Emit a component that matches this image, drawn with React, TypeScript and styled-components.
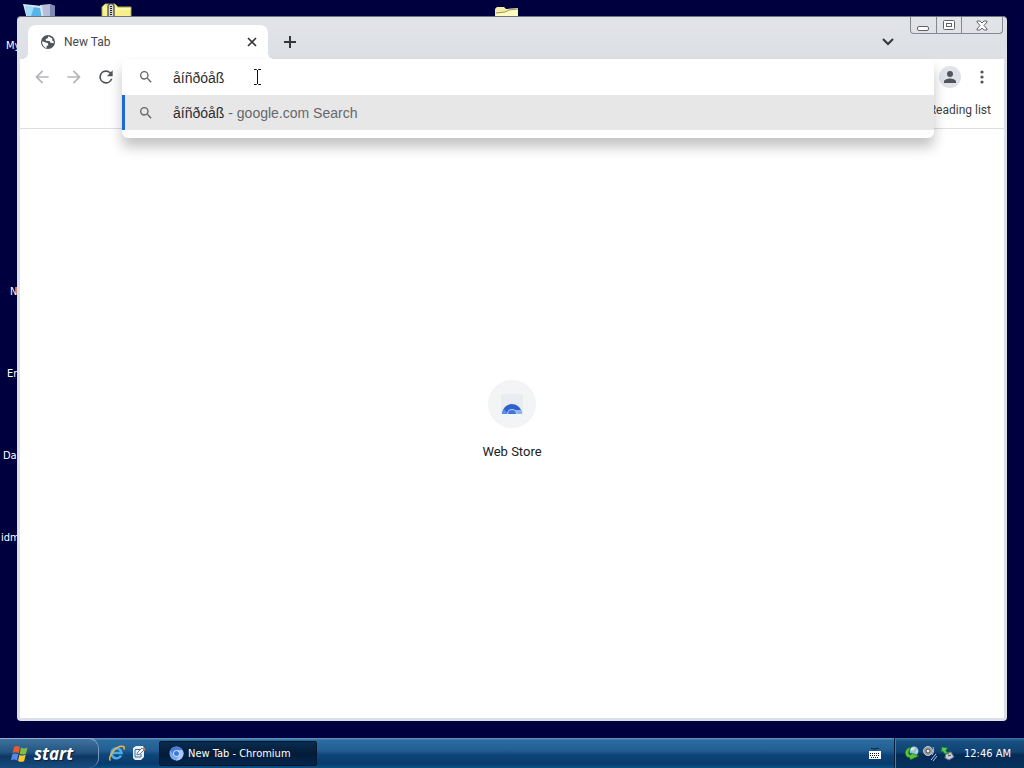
import React, { useState } from 'react'
import styled, { createGlobalStyle } from 'styled-components'

const GlobalStyle = createGlobalStyle`
  * {
    box-sizing: border-box;
  }
  body {
    margin: 0;
    font-family: Roboto, 'Liberation Sans', sans-serif;
  }
  button {
    border: 0;
    padding: 0;
    background: none;
    font-family: inherit;
  }
`

const Screen = styled.div`
  display: flex;
  flex-direction: column;
  height: 100vh;
  overflow: hidden;
  background: #00003f;
`

const Desktop = styled.main`
  position: relative;
  flex: 1;
`

const Shortcut = styled.div<{ x: number; y: number }>`
  position: absolute;
  left: ${props => props.x}px;
  top: ${props => props.y}px;
  color: #ffffff;
  font: 11px/16px 'DejaVu Sans Condensed', 'DejaVu Sans', sans-serif;
  white-space: nowrap;

  svg {
    display: block;
  }
`

const Window = styled.section`
  position: absolute;
  top: 16px;
  right: 17px;
  bottom: 17px;
  left: 17px;
  display: flex;
  flex-direction: column;
  padding: 0 3px 3px;
  border-top: 1px solid #70747c;
  border-radius: 4px;
  background: #dddfe9;
`

const TitleBar = styled.header`
  display: flex;
  align-items: flex-end;
  height: 42px;
  padding-left: 8px;
  background: linear-gradient(#e2e4e8, #dcdfe4);
`

const Tab = styled.div`
  position: relative;
  display: flex;
  align-items: center;
  width: 240px;
  height: 34px;
  padding: 0 8px 0 12px;
  border-radius: 8px 8px 0 0;
  background: #ffffff;
  color: #45494d;
  font-size: 12px;

  &::before,
  &::after {
    content: '';
    position: absolute;
    bottom: 0;
    width: 6px;
    height: 6px;
  }
  &::before {
    right: 100%;
    background: radial-gradient(circle at 0 0, transparent 6px, #ffffff 6px);
  }
  &::after {
    left: 100%;
    background: radial-gradient(circle at 100% 0, transparent 6px, #ffffff 6px);
  }
`

const TabTitle = styled.span`
  flex: 1;
  margin-left: 8px;
`

const IconButton = styled.button<{ size: number }>`
  display: flex;
  align-items: center;
  justify-content: center;
  flex: none;
  width: ${props => props.size}px;
  height: ${props => props.size}px;
  border-radius: 50%;
`

const NewTabButton = styled(IconButton)`
  margin: 0 auto 3px 8px;
`

const TabSearchButton = styled(IconButton)`
  margin: 0 8px 3px 0;
`

const WindowButtons = styled.div`
  display: flex;
  align-self: flex-start;
  margin-right: 1px;
  border: 1px solid #85898f;
  border-top: 0;
  border-radius: 0 0 4px 4px;
`

const WindowButton = styled.button<{ $wide?: boolean }>`
  display: flex;
  align-items: center;
  justify-content: center;
  width: ${props => (props.$wide ? 41 : 25)}px;
  height: 16px;

  & + & {
    border-left: 1px solid #85898f;
  }
`

const Toolbar = styled.nav`
  position: relative;
  z-index: 1;
  display: flex;
  align-items: center;
  height: 36px;
  padding: 0 11px 0 8px;
  background: #ffffff;
`

const NavButtons = styled.div`
  display: flex;
  gap: 4px;
`

const OmniboxSlot = styled.div`
  position: relative;
  flex: 1;
  height: 36px;
  margin: 0 2px;
`

const Omnibox = styled.div`
  position: absolute;
  top: 0;
  right: 0;
  left: 0;
  padding-bottom: 8px;
  border-radius: 6px;
  background: #ffffff;
  box-shadow: 0 9px 13px rgba(0, 0, 0, 0.24);
`

const OmniboxRow = styled.label`
  display: flex;
  align-items: center;
  height: 36px;
  padding-left: 16px;
`

const Address = styled.input`
  flex: 1;
  margin-left: 19px;
  padding: 2px 0 0;
  border: 0;
  outline: 0;
  background: none;
  color: #2b2c2f;
  font: 14px 'Liberation Sans', sans-serif;
`

const Suggestion = styled.button`
  display: flex;
  align-items: center;
  width: 100%;
  height: 35px;
  padding-left: 13px;
  border-left: 3px solid #1f67d2;
  background: #e7e7e7;
  color: #66686b;
  font: 14px 'Liberation Sans', sans-serif;
  text-align: left;
  white-space: pre;
`

const SuggestionText = styled.span`
  margin-left: 19px;
  padding-top: 1px;

  b {
    color: #2b2c2f;
    font-weight: normal;
  }
`

const Avatar = styled(IconButton)`
  margin: 0 10px 0 3px;
  background: #dfe2e8;
`

const BookmarksBar = styled.div`
  display: flex;
  align-items: center;
  justify-content: flex-end;
  height: 34px;
  padding: 0 13px 4px;
  border-bottom: 1px solid #dcdde0;
  background: #ffffff;
`

const ReadingList = styled.button`
  color: #3c4043;
  font-size: 12px;
`

const Page = styled.div`
  display: flex;
  flex: 1;
  justify-content: center;
  align-items: center;
  padding-bottom: 8px;
  background: #ffffff;
`

const StoreLink = styled.a`
  display: flex;
  flex-direction: column;
  align-items: center;
  gap: 16px;
  color: #202124;
  font-size: 13px;
  line-height: 16px;
  text-decoration: none;
`

const StoreIcon = styled.span`
  display: flex;
  align-items: center;
  justify-content: center;
  width: 48px;
  height: 48px;
  border-radius: 50%;
  background: #f3f4f6;
`

const TextCursor = styled.svg`
  position: absolute;
  top: 10px;
  left: 131px;
`

const Taskbar = styled.footer`
  display: flex;
  flex: none;
  height: 30px;
  background: linear-gradient(#6f9cc4 0, #2b6c9f 2px, #245f94 12px, #0d4479 17px, #093b6b 26px, #0a5288 30px);
  color: #ffffff;
`

const StartButton = styled.button`
  display: flex;
  align-items: center;
  gap: 4px;
  width: 99px;
  padding-left: 10px;
  border-top: 1px solid #8eb0cd;
  border-right: 1px solid #7197bb;
  border-radius: 0 10px 10px 0;
  background: linear-gradient(#3e729f, #245480 45%, #0d3764 60%, #164d7e);
  color: #ffffff;
  font: italic bold 17px 'Open Sans', 'Noto Sans', sans-serif;
  text-shadow: 1px 1px 1px #04203f;
`

const QuickLaunch = styled.div`
  display: flex;
  align-items: center;
  gap: 6px;
  margin: 0 13px 0 9px;
`

const TaskButton = styled.button`
  display: flex;
  align-items: center;
  gap: 4px;
  align-self: center;
  width: 158px;
  height: 25px;
  padding-left: 9px;
  border: 1px solid #04172e;
  border-radius: 2px;
  background: linear-gradient(#0a2c4e, #041c38 50%, #02254a);
  color: #ffffff;
  font: 11px 'DejaVu Sans Condensed', 'DejaVu Sans', sans-serif;
`

const LanguageBar = styled.div`
  display: flex;
  align-items: center;
  margin-left: auto;
  padding-right: 12px;
`

const Tray = styled.div`
  display: flex;
  align-items: center;
  gap: 2px;
  padding: 0 13px 0 9px;
  border-left: 1px solid #04203f;
  box-shadow: inset 1px 0 #3d7fae;
  background: linear-gradient(#3a78a8 0, #17507f 3px, #104272 14px, #052b55 17px, #06325e);
  font: 11px 'DejaVu Sans Condensed', 'DejaVu Sans', sans-serif;
`

const Clock = styled.time`
  margin-left: 6px;
`

const SearchIcon = () => (
  <svg width="16" height="16" viewBox="0 0 24 24" fill="#5f6368">
    <path d="M15.5 14h-.79l-.28-.27A6.47 6.47 0 0 0 16 9.500 6.500 6.500 0 1 0 9.500 16c1.610 0 3.090-.59 4.230-1.570l.27.28v.79l5 4.990L20.490 19zm-6 0a4.500 4.500 0 1 1 0-9 4.500 4.500 0 0 1 0 9z" />
  </svg>
)

const ArrowIcon = ({ flip }: { flip?: boolean }) => (
  <svg width="20" height="20" viewBox="0 0 24 24" fill="#b3b5b8">
    <path
      transform={flip ? 'matrix(-1 0 0 1 24 0)' : undefined}
      d="M20 11H7.830l5.590-5.590L12 4l-8 8 8 8 1.410-1.410L7.830 13H20z"
    />
  </svg>
)

const GlobeIcon = () => (
  <svg width="16" height="16" viewBox="0 0 16 16">
    <circle cx="8" cy="8" r="7" fill="#50555b" />
    <path d="M2.200 7.200 5.800 8.600 8 9.200l.2 2.100-1.600.8v1.800C3.900 13.300 2 10.800 2.200 7.200zM8.300 2.300l-.6 2-2 .8.2 1.600 3.500.2 1.300 1.900 2.700.4.5-1.700-1.300-.5-.6-2.700z" fill="#fff" />
  </svg>
)

const ChromiumIcon = ({ size }: { size: number }) => (
  <svg width={size} height={size} viewBox="0 0 16 16">
    <circle cx="8" cy="8" r="7.500" fill="#79a7f0" />
    <path d="M1.500 4.300A7.500 7.500 0 0 1 14.500 4.500H8a3.500 3.500 0 0 0-3.300 4.700z" fill="#4a7bd6" />
    <path d="M14.500 4.500A7.500 7.500 0 0 1 7.500 15.500l3.300-5.500A3.500 3.500 0 0 0 8 4.500z" fill="#a9c7f8" />
    <circle cx="8" cy="8" r="3.500" fill="#e8f0fd" />
    <circle cx="8" cy="8" r="2.700" fill="#3d78dc" />
  </svg>
)

const StoreLogo = () => (
  <svg width="24" height="24" viewBox="0 0 24 24">
    <path d="M1 2h22v20H1z" fill="#e9ecf0" />
    <path d="M2 22a10 10 0 0 1 20 0z" fill="#2f62cf" />
    <path d="M2 22a10 10 0 0 1 2-5l4 5z" fill="#5b8dec" />
    <path d="M16 22a4 4 0 0 0-2-4h7a10 10 0 0 1 1 4z" fill="#8db4f7" />
    <path d="M7 22a5 5 0 0 1 10 0z" fill="#b9cff8" />
    <path d="M8 22a4 4 0 0 1 8 0z" fill="#3f76e0" />
  </svg>
)

const WindowsFlag = () => (
  <svg width="20" height="20" viewBox="0 0 20 20">
    <path d="M4 3c2-1.300 4-1.200 6 0L8.700 9.200c-2-1.200-4-1.200-6-.1z" fill="#e8592d" />
    <path d="M11 3.500c2 1.200 4 1.200 6.500 0L16 9.700c-2 1.200-4 1.200-6.300 0z" fill="#7cc142" />
    <path d="M2.400 10.200c2-1.100 4-1.100 6 .1L7 16.500c-2-1.200-4-1.200-6.100-.2z" fill="#5688e8" />
    <path d="M9.400 10.700c2 1.200 4 1.200 6.300.1l-1.500 6.200c-2 1.200-4 1.100-6.200-.1z" fill="#f8c92d" />
  </svg>
)

const ExplorerIcon = () => (
  <svg width="17" height="17" viewBox="0 0 17 17">
    <path d="M13 10.500A5 5 0 1 1 13.500 8H5" fill="none" stroke="#4cabec" strokeWidth="2.600" />
    <path d="M2.500 15.500C-1 13 8-.5 15.500 1.500c1 .5.8 2 .2 3" fill="none" stroke="#f0b83c" strokeWidth="1.500" />
  </svg>
)

const ShowDesktopIcon = () => (
  <svg width="15" height="16" viewBox="0 0 15 16">
    <path d="M2 3l3-2h7l1 2v9l-3 3H4l-2-2z" fill="#e9f1f8" />
    <path d="M4 4.500h6M4 5v7h6V9" fill="none" stroke="#3f6c97" />
    <path d="m6 9 1-2 4-4 2 2-4 4-3 1z" fill="#fff" stroke="#345c82" strokeWidth=".8" />
    <path d="m12 3 2 2" stroke="#df7c35" strokeWidth="2" />
  </svg>
)

const KeyboardIcon = () => (
  <svg width="14" height="14" viewBox="0 0 14 14">
    <path d="M3 3c1-2 2 1 4 0s3-1 4 0" fill="none" stroke="#071a30" />
    <path d="M1 5h12v8H1z" fill="#fff" />
    <path d="M2 7.500h10M2 9.500h10M3 11.500h8" stroke="#101820" strokeDasharray="1 1" />
  </svg>
)

const ComputerIcon = () => (
  <svg width="34" height="18" viewBox="0 0 34 18">
    <path d="M18 4l10-1 5 2v13H18z" fill="#b7bdd8" />
    <path d="M28 3l5 2v13h-5z" fill="#7f89b5" />
    <path d="M1 3l19 2 2 13H5z" fill="#d9e6f5" />
    <path d="M3 5l15 2 2 11H6z" fill="#58b4e8" />
    <path d="M3 5l9 1-4 12H6z" fill="#9ddcf6" />
  </svg>
)

const ZipIcon = () => (
  <svg width="32" height="18" viewBox="0 0 32 18">
    <path d="M1 6l3-3h10l3 3h13v12H1z" fill="#f5f08d" stroke="#a9a544" />
    <path d="M2 8h28" stroke="#fffcc8" />
    <path d="M7 5c0-3 6-3 6 0v13H7z" fill="#d6d6cc" stroke="#222" />
    <path d="M10 5v13" stroke="#222" strokeWidth="2" strokeDasharray="1 1" />
  </svg>
)

const FolderIcon = () => (
  <svg width="26" height="14" viewBox="0 0 26 14">
    <path d="M1 5l2-2h7l2 2 12-1v10H1z" fill="#f3ecaa" />
    <path d="M2 9l8-1 4-2 10-1v9H2z" fill="#fffbc0" />
    <path d="M2 9l9-1 4-2 9-1" fill="none" stroke="#827b45" strokeWidth=".8" />
  </svg>
)

const TransferIcon = () => (
  <svg width="16" height="16" viewBox="0 0 16 16">
    <circle cx="10" cy="6" r="4.500" fill="#8fc3e8" />
    <path d="M7 3l4-1-1 3-3 1zM12 6l2-1-1 4z" fill="#e9e6b0" />
    <path d="M7 2C0 3-1 12 6 13v2l9-4-8-3v2C4 10 4 6 7 2z" fill="#58c43a" stroke="#16631c" strokeWidth=".6" />
  </svg>
)

const VolumeIcon = () => (
  <svg width="16" height="16" viewBox="0 0 16 16">
    <circle cx="6" cy="6" r="4.500" fill="#969b9b" stroke="#c7ccca" />
    <circle cx="6" cy="6" r="2" fill="#e8eceb" stroke="#4f5555" />
    <path d="M11 2c1 2 1 5-1 8M9 15l5-6M11 16l4-5" fill="none" stroke="#a9c4ef" />
  </svg>
)

const DeviceIcon = () => (
  <svg width="16" height="16" viewBox="0 0 16 16">
    <path d="M6 8l5-1 3 5-5 3-4-2z" fill="#c8ccd2" stroke="#65717d" />
    <path d="M8 11l3-1" stroke="#42505d" />
    <path d="M2 2l6 1-2 2c0 2 1 3 3 4-4 0-6-1-6-3L1 7z" fill="#55cf48" stroke="#187222" strokeWidth=".6" />
  </svg>
)

const labels = [
  { x: 6, y: 38, text: 'My' },
  { x: 10, y: 284, text: 'N' },
  { x: 7, y: 366, text: 'Er' },
  { x: 3, y: 448, text: 'Da' },
  { x: 1, y: 530, text: 'idm' },
]

export default function App() {
  const [query, setQuery] = useState('åíñðóåß')

  return (
    <Screen>
      <GlobalStyle />
      <Desktop>
        <Shortcut x={22} y={1}><ComputerIcon /></Shortcut>
        <Shortcut x={101} y={1}><ZipIcon /></Shortcut>
        <Shortcut x={494} y={4}><FolderIcon /></Shortcut>
        {labels.map(({ x, y, text }) => (
          <Shortcut key={text} x={x} y={y}>{text}</Shortcut>
        ))}

        <Window>
          <TitleBar>
            <Tab>
              <GlobeIcon />
              <TabTitle>New Tab</TabTitle>
              <IconButton size={16} aria-label="Close tab">
                <svg width="10" height="10" viewBox="0 0 10 10" stroke="#34373b" strokeWidth="1.700">
                  <path d="m1 1 8 8m0-8L1 9" />
                </svg>
              </IconButton>
            </Tab>
            <NewTabButton size={28} aria-label="New tab">
              <svg width="12" height="12" viewBox="0 0 12 12" stroke="#34373b" strokeWidth="2">
                <path d="M6 0v12M0 6h12" />
              </svg>
            </NewTabButton>
            <TabSearchButton size={28} aria-label="Search tabs">
              <svg width="12" height="8" viewBox="0 0 12 8" fill="none" stroke="#34373b" strokeWidth="2">
                <path d="m1 1 5 5 5-5" />
              </svg>
            </TabSearchButton>
            <WindowButtons>
              <WindowButton aria-label="Minimize">
                <svg width="13" height="14" viewBox="0 0 13 14">
                  <rect x=".5" y="8.500" width="11" height="4" rx="1.500" fill="#fff" stroke="#60646a" />
                </svg>
              </WindowButton>
              <WindowButton aria-label="Maximize">
                <svg width="15" height="12" viewBox="0 0 15 12" fill="#fff" stroke="#60646a">
                  <rect x="1.500" y="1.500" width="11" height="9" rx="1" />
                  <rect x="4.500" y="4.500" width="5" height="3" />
                </svg>
              </WindowButton>
              <WindowButton $wide aria-label="Close">
                <svg width="12" height="11" viewBox="0 0 12 11">
                  <path d="M1 1h3l2 2 2-2h3v1L8 5.500 11 9v1H8L6 8l-2 2H1V9l3-3.500L1 2z" fill="#fff" stroke="#60646a" />
                </svg>
              </WindowButton>
            </WindowButtons>
          </TitleBar>

          <Toolbar>
            <NavButtons>
              <IconButton size={28} aria-label="Back"><ArrowIcon /></IconButton>
              <IconButton size={28} aria-label="Forward"><ArrowIcon flip /></IconButton>
              <IconButton size={28} aria-label="Reload">
                <svg width="20" height="20" viewBox="0 0 24 24" fill="#505459">
                  <path d="M17.650 6.350A8 8 0 1 0 19.730 14h-2.080A6 6 0 1 1 12 6c1.660 0 3.140.69 4.220 1.780L13 11h7V4z" />
                </svg>
              </IconButton>
            </NavButtons>
            <OmniboxSlot>
              <Omnibox>
                <OmniboxRow>
                  <SearchIcon />
                  <Address
                    aria-label="Address and search bar"
                    value={query}
                    onChange={e => setQuery(e.target.value)}
                  />
                </OmniboxRow>
                <Suggestion>
                  <SearchIcon />
                  <SuggestionText><b>{query}</b> - google.com Search</SuggestionText>
                </Suggestion>
              </Omnibox>
              <TextCursor width="9" height="16" viewBox="0 0 9 16" fill="none" stroke="#111">
                <path d="M1 .5h2.500l1 1 1-1H8M4.500 1v14M1 15.500h2.500l1-1 1 1H8" />
              </TextCursor>
            </OmniboxSlot>
            <Avatar size={22} aria-label="Profile">
              <svg width="18" height="18" viewBox="0 0 24 24" fill="#50555b">
                <path d="M12 12a4 4 0 1 0 0-8 4 4 0 0 0 0 8zm0 2c-2.700 0-8 1.300-8 4v2h16v-2c0-2.700-5.300-4-8-4z" />
              </svg>
            </Avatar>
            <IconButton size={22} aria-label="Menu">
              <svg width="4" height="14" viewBox="0 0 4 14" fill="#50555b">
                <circle cx="2" cy="2" r="1.600" />
                <circle cx="2" cy="7" r="1.600" />
                <circle cx="2" cy="12" r="1.600" />
              </svg>
            </IconButton>
          </Toolbar>

          <BookmarksBar>
            <ReadingList>Reading list</ReadingList>
          </BookmarksBar>

          <Page>
            <StoreLink href="#store">
              <StoreIcon><StoreLogo /></StoreIcon>
              Web Store
            </StoreLink>
          </Page>
        </Window>
      </Desktop>

      <Taskbar>
        <StartButton><WindowsFlag />start</StartButton>
        <QuickLaunch>
          <ExplorerIcon />
          <ShowDesktopIcon />
        </QuickLaunch>
        <TaskButton>
          <ChromiumIcon size={15} />
          New Tab - Chromium
        </TaskButton>
        <LanguageBar><KeyboardIcon /></LanguageBar>
        <Tray>
          <TransferIcon />
          <VolumeIcon />
          <DeviceIcon />
          <Clock>12:46 AM</Clock>
        </Tray>
      </Taskbar>
    </Screen>
  )
}
